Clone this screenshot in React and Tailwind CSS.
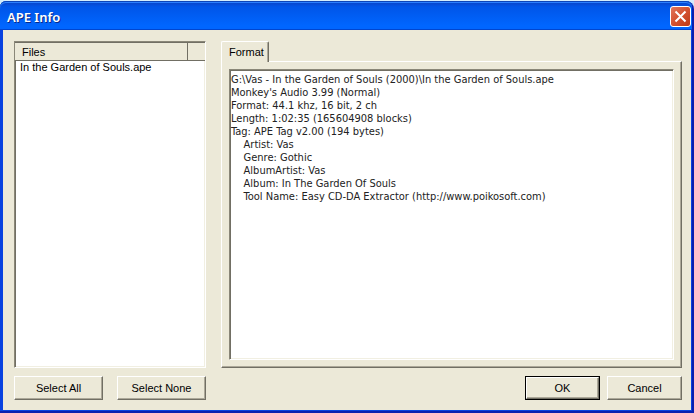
import { useState } from 'react';

const files = ['In the Garden of Souls.ape'];

const details = `G:\\Vas - In the Garden of Souls (2000)\\In the Garden of Souls.ape
Monkey's Audio 3.99 (Normal)
Format: 44.1 khz, 16 bit, 2 ch
Length: 1:02:35 (165604908 blocks)
Tag: APE Tag v2.00 (194 bytes)
    Artist: Vas
    Genre: Gothic
    AlbumArtist: Vas
    Album: In The Garden Of Souls
    Tool Name: Easy CD-DA Extractor (http://www.poikosoft.com)`;

const bevel = 'border border-t-white border-l-white border-r-[#716f64] border-b-[#716f64]';

function DialogButton({ children, className, isDefault }) {
  const face = `${bevel} flex h-full w-full items-center justify-center shadow-[inset_-1px_-1px_0_#aca899]`;
  return (
    <button
      type="button"
      className={`h-6 bg-[#ece9d8] text-[11px] leading-3 ${isDefault ? 'border border-black' : ''} ${className}`}
    >
      <span className={face}>{children}</span>
    </button>
  );
}

function TitleBar() {
  return (
    <header className="flex h-[29px] shrink-0 items-center justify-between rounded-t-md bg-linear-to-b from-[#0a3fc0] from-0% via-[#0055e8] via-20% to-[#0066ff] to-85% pr-px pl-[7px] shadow-[inset_0_1px_0_#0c45b8,inset_0_2px_0_#2a80ff,inset_0_-1px_0_#0046d0]">
      <h1 className="pt-[3px] font-['Noto_Sans',sans-serif] text-[13px] leading-4 font-semibold text-white [text-shadow:1px_1px_0_#0a2a8a]">
        APE Info
      </h1>
      <button
        type="button"
        aria-label="Close"
        className="mt-[2px] flex h-[21px] w-[21px] items-center justify-center rounded-[3px] border border-white bg-linear-to-br from-[#e0765c] via-[#d4512f] to-[#bd3a14]"
      >
        <svg viewBox="0 0 13 13" className="h-[13px] w-[13px]" fill="none" stroke="#fff" strokeWidth="2">
          <path d="M1.5 1.5l10 10M11.5 1.5l-10 10" />
        </svg>
      </button>
    </header>
  );
}

function FileList() {
  return (
    <div className="flex-1 border border-t-[#8a8778] border-r-white border-b-white border-l-[#8a8778] bg-white shadow-[inset_1px_1px_0_#716f64,inset_-1px_-1px_0_#f1efe2]">
      <table className="w-full table-fixed border-collapse text-left text-[11px] leading-3">
        <thead>
          <tr className="h-[18px] border-t border-b border-t-[#716f64] border-b-[#716f64] bg-[#ece9d8]">
            <th scope="col" className="border-r border-r-[#716f64] pl-[7px] font-normal">Files</th>
            <td className="w-[18px]" />
          </tr>
        </thead>
        <tbody>
          {files.map((file) => (
            <tr key={file}>
              <td colSpan={2} className="pl-[5px]">{file}</td>
            </tr>
          ))}
        </tbody>
      </table>
    </div>
  );
}

export default function App() {
  const [tab, setTab] = useState('format');

  return (
    <div className="min-h-screen bg-[#d4ecfb] pt-px font-['Liberation_Sans',sans-serif] text-black">
      <div className="flex min-h-[calc(100vh-1px)] flex-col rounded-t-lg border-r-2 border-b-2 border-r-[#0a1fae] border-b-[#0a1fae] bg-[#0842e0]">
        <TitleBar />
        <main className="mr-px mb-px ml-[3px] flex flex-1 gap-[15px] bg-[#ece9d8] pt-[11px] pr-[9px] pb-[10px] pl-[11px]">
          <section className="flex w-48 shrink-0 flex-col gap-2">
            <FileList />
            <div className="flex justify-between">
              <DialogButton className="w-[89px]">Select All</DialogButton>
              <DialogButton className="w-[89px]">Select None</DialogButton>
            </div>
          </section>

          <section className="flex min-w-0 flex-1 flex-col">
            <div role="tablist">
              <button
                type="button"
                role="tab"
                id="tab-format"
                aria-selected={tab === 'format'}
                aria-controls="panel-format"
                onClick={() => setTab('format')}
                className="relative -mb-px block h-[21px] rounded-t-xs border border-t-white border-r-[#716f64] border-b-0 border-l-white bg-[#ece9d8] pr-1 pl-[7px] text-[11px] leading-3 shadow-[inset_-1px_0_0_#aca899]"
              >
                Format
              </button>
            </div>
            <div
              role="tabpanel"
              id="panel-format"
              aria-labelledby="tab-format"
              className={`${bevel} flex flex-1 p-[7px] shadow-[inset_-1px_-1px_0_#aca899]`}
            >
              <textarea
                readOnly
                aria-label="Format details"
                value={details}
                className="w-full flex-1 resize-none border border-t-[#8a8778] border-r-white border-b-white border-l-[#8a8778] bg-white px-px py-[3px] font-['DejaVu_Sans_Condensed','DejaVu_Sans',sans-serif] text-[11px] leading-[13px] text-[#222] shadow-[inset_1px_1px_0_#716f64,inset_-1px_-1px_0_#f1efe2] outline-none"
              />
            </div>
            <div className="mt-2 flex justify-end gap-[7px]">
              <DialogButton className="w-[75px]" isDefault>OK</DialogButton>
              <DialogButton className="w-[75px]">Cancel</DialogButton>
            </div>
          </section>
        </main>
      </div>
    </div>
  );
}
